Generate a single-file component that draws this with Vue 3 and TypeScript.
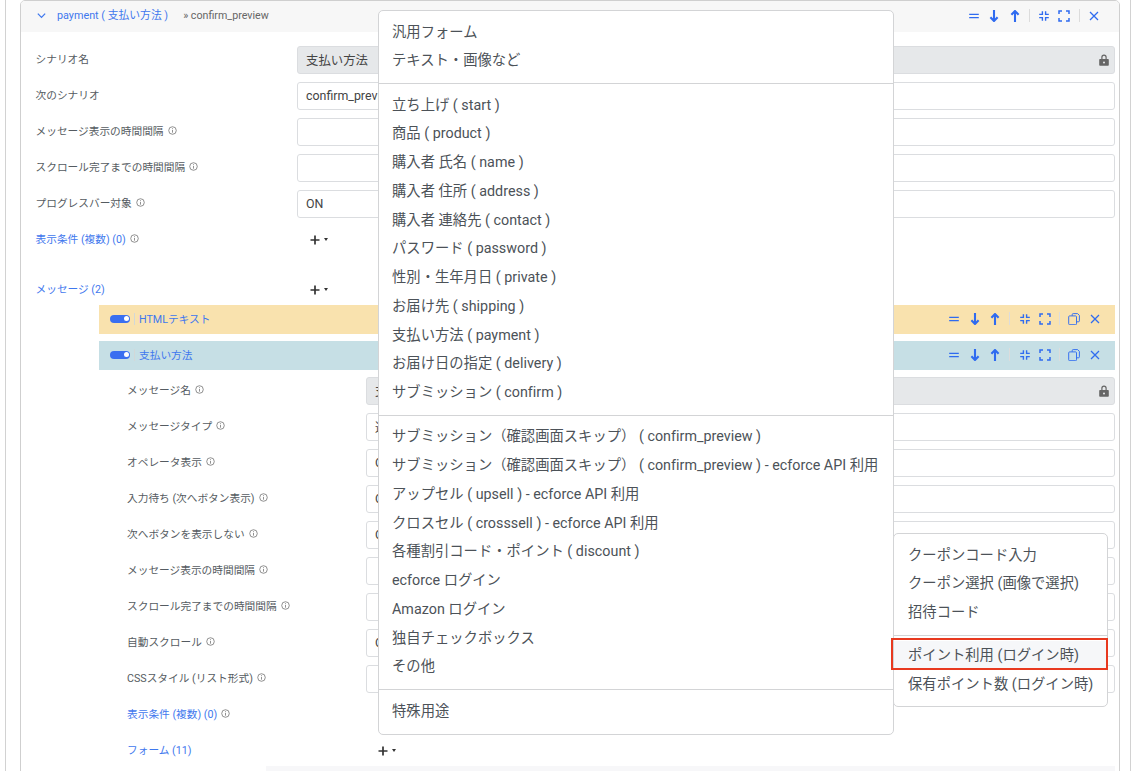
<script setup lang="ts">
type IconName = 'equal' | 'down' | 'up' | 'compress' | 'expand' | 'copy' | 'close'

const icons: Record<IconName, { d: string; w: number }> = {
  equal: { d: 'M1.2 4.4h9.6M1.2 7.6h9.6', w: 1.1 },
  down: { d: 'M6 0v10M2.4 7.2 6 11l3.6-3.8', w: 2.1 },
  up: { d: 'M6 12V2M2.4 4.8 6 1l3.6 3.8', w: 2.1 },
  compress: { d: 'M4.4 1.2v3.2H1.2M7.6 1.2v3.2h3.2M4.4 10.8V7.6H1.2M7.6 10.8V7.6h3.2', w: 1.4 },
  expand: { d: 'M1 4V1h3M8 1h3v3M1 8v3h3M11 8v3H8', w: 1.5 },
  copy: { d: 'M4.2 2.8V1.6q0-1 1-1h4.4l1.8 1.8v5.4q0 1-1 1H8.8M1.6 2.9h6q.9 0 .9.9v7q0 .9-.9.9h-6q-.9 0-.9-.9v-7q0-.9.9-.9z', w: 0.95 },
  close: { d: 'M2 2l8 8M10 2l-8 8', w: 1.25 }
}

const headActions: (IconName | 'sep')[] = ['equal', 'down', 'up', 'sep', 'compress', 'expand', 'sep', 'close']
const barActions: (IconName | 'sep')[] = ['equal', 'down', 'up', 'sep', 'compress', 'expand', 'sep', 'copy', 'close']

interface Field {
  label: string
  value: string
  info?: boolean
  locked?: boolean
}

const scenarioFields: Field[] = [
  { label: 'シナリオ名', value: '支払い方法', locked: true },
  { label: '次のシナリオ', value: 'confirm_preview' },
  { label: 'メッセージ表示の時間間隔', value: '', info: true },
  { label: 'スクロール完了までの時間間隔', value: '', info: true },
  { label: 'プログレスバー対象', value: 'ON', info: true }
]

const messageFields: Field[] = [
  { label: 'メッセージ名', value: '支払い方法', info: true, locked: true },
  { label: 'メッセージタイプ', value: '選択', info: true },
  { label: 'オペレータ表示', value: 'ON', info: true },
  { label: '入力待ち (次へボタン表示)', value: 'ON', info: true },
  { label: '次へボタンを表示しない', value: 'ON', info: true },
  { label: 'メッセージ表示の時間間隔', value: '', info: true },
  { label: 'スクロール完了までの時間間隔', value: '', info: true },
  { label: '自動スクロール', value: 'ON', info: true },
  { label: 'CSSスタイル (リスト形式)', value: '', info: true }
]

const bars = [
  { title: 'HTMLテキスト', tone: 'amber' },
  { title: '支払い方法', tone: 'teal' }
]

const menuGroups: string[][] = [
  ['汎用フォーム', 'テキスト・画像など'],
  [
    '立ち上げ ( start )',
    '商品 ( product )',
    '購入者 氏名 ( name )',
    '購入者 住所 ( address )',
    '購入者 連絡先 ( contact )',
    'パスワード ( password )',
    '性別・生年月日 ( private )',
    'お届け先 ( shipping )',
    '支払い方法 ( payment )',
    'お届け日の指定 ( delivery )',
    'サブミッション ( confirm )'
  ],
  [
    'サブミッション（確認画面スキップ） ( confirm_preview )',
    'サブミッション（確認画面スキップ） ( confirm_preview ) - ecforce API 利用',
    'アップセル ( upsell ) - ecforce API 利用',
    'クロスセル ( crosssell ) - ecforce API 利用',
    '各種割引コード・ポイント ( discount )',
    'ecforce ログイン',
    'Amazon ログイン',
    '独自チェックボックス',
    'その他'
  ],
  ['特殊用途']
]

const subGroups: string[][] = [
  ['クーポンコード入力', 'クーポン選択 (画像で選択)', '招待コード'],
  ['ポイント利用 (ログイン時)', '保有ポイント数 (ログイン時)']
]
</script>

<template>
  <div class="page">
    <div class="frame">
      <section class="panel">
        <header class="panel-head">
          <svg class="chevron" viewBox="0 0 12 12"><path d="M2 4l4 4 4-4" /></svg>
          <span class="scenario-title">payment ( 支払い方法 )</span>
          <span class="scenario-next">» confirm_preview</span>
          <div class="actions">
            <template v-for="(a, i) in headActions" :key="i">
              <span v-if="a === 'sep'" class="sep"></span>
              <span v-else class="action">
                <svg viewBox="0 0 12 12"><path :d="icons[a].d" :stroke-width="icons[a].w" /></svg>
              </span>
            </template>
          </div>
        </header>

        <div class="panel-body">
          <div v-for="f in scenarioFields" :key="f.label" class="row">
            <label class="label">
              {{ f.label }}
              <svg v-if="f.info" class="info" viewBox="0 0 10 10"><circle cx="5" cy="5" r="4.2" /><path d="M5 4.4v3M5 2.5v1" /></svg>
            </label>
            <div class="input" :class="{ locked: f.locked }">
              <span>{{ f.value }}</span>
              <svg v-if="f.locked" class="lock" viewBox="0 0 10 12"><path fill-rule="evenodd" d="M1 5h8a.8.8 0 0 1 .8.8v5.2a.8.8 0 0 1-.8.8H1a.8.8 0 0 1-.8-.8V5.800A.8.8 0 0 1 1 5zm1.300 0V3.200a2.700 2.700 0 0 1 5.400 0V5H6.500V3.200a1.500 1.500 0 0 0-3 0V5zM5 7.400a1 1 0 1 0 0 2 1 1 0 0 0 0-2z" /></svg>
            </div>
          </div>

          <div class="row">
            <label class="label link">
              表示条件 (複数) (0)
              <svg class="info" viewBox="0 0 10 10"><circle cx="5" cy="5" r="4.2" /><path d="M5 4.4v3M5 2.5v1" /></svg>
            </label>
            <button class="add">
              <svg class="plus" viewBox="0 0 10 10"><path d="M5 .5v9M.5 5h9" /></svg>
              <span class="caret"></span>
            </button>
          </div>

          <div class="row messages-row">
            <label class="label link">メッセージ (2)</label>
            <button class="add">
              <svg class="plus" viewBox="0 0 10 10"><path d="M5 .5v9M.5 5h9" /></svg>
              <span class="caret"></span>
            </button>
          </div>

          <div class="bars">
            <div v-for="b in bars" :key="b.title" class="bar" :class="b.tone">
              <span class="toggle"><span class="knob"></span></span>
              <span class="bar-divider"></span>
              <span class="bar-title">{{ b.title }}</span>
              <div class="actions">
                <template v-for="(a, i) in barActions" :key="i">
                  <span v-if="a === 'sep'" class="sep"></span>
                  <span v-else class="action">
                    <svg viewBox="0 0 12 12"><path :d="icons[a].d" :stroke-width="icons[a].w" /></svg>
                  </span>
                </template>
              </div>
            </div>
          </div>

          <div class="message-fields">
            <div v-for="f in messageFields" :key="f.label" class="row">
              <label class="label">
                {{ f.label }}
                <svg class="info" viewBox="0 0 10 10"><circle cx="5" cy="5" r="4.2" /><path d="M5 4.4v3M5 2.5v1" /></svg>
              </label>
              <div class="input" :class="{ locked: f.locked }">
                <span>{{ f.value }}</span>
                <svg v-if="f.locked" class="lock" viewBox="0 0 10 12"><path fill-rule="evenodd" d="M1 5h8a.8.8 0 0 1 .8.8v5.2a.8.8 0 0 1-.8.8H1a.8.8 0 0 1-.8-.8V5.800A.8.8 0 0 1 1 5zm1.300 0V3.200a2.700 2.700 0 0 1 5.400 0V5H6.500V3.200a1.500 1.500 0 0 0-3 0V5zM5 7.400a1 1 0 1 0 0 2 1 1 0 0 0 0-2z" /></svg>
              </div>
            </div>
            <div class="row">
              <label class="label link">
                表示条件 (複数) (0)
                <svg class="info" viewBox="0 0 10 10"><circle cx="5" cy="5" r="4.2" /><path d="M5 4.4v3M5 2.5v1" /></svg>
              </label>
            </div>
            <div class="row">
              <label class="label link">フォーム (11)</label>
              <button class="add">
                <svg class="plus" viewBox="0 0 10 10"><path d="M5 .5v9M.5 5h9" /></svg>
                <span class="caret"></span>
              </button>
            </div>
          </div>

          <div class="form-block"></div>
        </div>
      </section>
    </div>

    <nav class="menu main-menu">
      <div v-for="(g, i) in menuGroups" :key="i" class="menu-group">
        <div v-for="item in g" :key="item" class="menu-item">{{ item }}</div>
      </div>
    </nav>

    <nav class="menu sub-menu">
      <div v-for="(g, i) in subGroups" :key="i" class="menu-group">
        <div
          v-for="item in g"
          :key="item"
          class="menu-item"
          :class="{ marked: item === 'ポイント利用 (ログイン時)' }"
        >{{ item }}</div>
      </div>
    </nav>
  </div>
</template>

<style scoped>
.page {
  position: relative;
  width: 1139px;
  height: 771px;
  overflow: hidden;
  background: #fff;
  font-family: Roboto, "Noto Sans CJK JP", sans-serif;
  color: #555b61;
}
.frame {
  box-sizing: border-box;
  width: 1126px;
  height: 771px;
  margin-left: 5px;
  padding: 0 10px 0 14px;
  border-left: 1px solid #d2d2d2;
  border-right: 1px solid #d2d2d2;
}
.panel {
  box-sizing: border-box;
  height: 800px;
  border: 1px solid #cfcfcf;
  border-radius: 5px 5px 0 0;
  overflow: hidden;
}
.panel-head {
  box-sizing: border-box;
  display: flex;
  align-items: center;
  height: 31px;
  padding: 0 15px 2px 15px;
  background: #f7f7f7;
}
.chevron {
  width: 11px;
  height: 11px;
  margin-right: 10px;
  fill: none;
  stroke: #3f78ee;
  stroke-width: 1.4;
}
.scenario-title {
  padding-bottom: 3px;
  font-size: 10.8px;
  color: #3f78ee;
}
.scenario-next {
  margin-left: 15px;
  font-size: 10.7px;
  color: #666;
}
.actions {
  display: flex;
  align-items: center;
  margin-left: auto;
}
.action {
  display: flex;
  justify-content: center;
  width: 20.4px;
}
.action svg {
  width: 12px;
  height: 12px;
  fill: none;
  stroke: #2f6bf0;
}
.sep {
  width: 1px;
  height: 13px;
  margin: 0 4px;
  background: #dcdcdc;
}
.panel-body {
  padding: 14px 4px 0 14.5px;
}
.row {
  display: grid;
  grid-template-columns: 261.5px 1fr;
  align-items: center;
  min-height: 28px;
  margin-bottom: 8px;
}
.label {
  display: flex;
  align-items: center;
  gap: 4px;
  padding-bottom: 3px;
  font-size: 10.7px;
  color: #555b61;
}
.link {
  color: #3f78ee;
}
.info {
  flex: none;
  width: 9px;
  height: 9px;
  fill: none;
  stroke: #666;
  stroke-width: 0.8;
}
.input {
  box-sizing: border-box;
  display: flex;
  align-items: center;
  justify-content: space-between;
  height: 28px;
  padding: 0 5px 1px 8px;
  border: 1px solid #dbdde0;
  border-radius: 3px;
  font-size: 12.4px;
  color: #444;
  background: #fff;
}
.input.locked {
  background: #e6e8ea;
}
.lock {
  width: 10px;
  height: 12px;
  fill: #666;
}
.add {
  display: flex;
  align-items: center;
  width: max-content;
  padding: 0 0 1px 13px;
  border: 0;
  background: none;
}
.message-fields .add {
  padding-left: 12px;
}
.plus {
  width: 10px;
  height: 10px;
  fill: none;
  stroke: #333;
  stroke-width: 1.7;
}
.caret {
  margin-left: 4px;
  border-top: 3px solid #333;
  border-left: 2.8px solid transparent;
  border-right: 2.8px solid transparent;
}
.messages-row {
  margin-top: 22px;
  margin-bottom: 1px;
}
.bars {
  display: flex;
  flex-direction: column;
  gap: 7px;
  margin-left: 63.5px;
}
.bar {
  box-sizing: border-box;
  display: flex;
  align-items: center;
  height: 29px;
  padding: 0 10px 2px 11px;
  font-size: 10.7px;
}
.amber {
  background: #f9e2ae;
}
.teal {
  background: #c6dfe5;
}
.toggle {
  position: relative;
  width: 20px;
  height: 8px;
  border-radius: 4px;
  background: #3a6ff0;
}
.knob {
  position: absolute;
  top: 1.5px;
  right: 1.5px;
  width: 5px;
  height: 5px;
  border-radius: 50%;
  background: #fff;
}
.bar-divider {
  width: 1px;
  height: 12px;
  margin: 0 4px;
  background: #d2d8d8;
}
.bar-title {
  color: #3f78ee;
}
.message-fields {
  margin-top: 7px;
  margin-left: 91.5px;
}
.message-fields .row {
  grid-template-columns: 239px 1fr;
}
.form-block {
  height: 40px;
  margin-top: -7px;
  margin-left: 230.5px;
  background: #f7f7f9;
}
.menu {
  position: absolute;
  box-sizing: border-box;
  border: 1px solid #d3d4d6;
  border-radius: 5px;
  background: #fff;
  font-size: 14.3px;
  letter-spacing: 0.02px;
  color: #4c5258;
}
.main-menu {
  left: 378px;
  top: 10px;
  width: 516px;
}
.sub-menu {
  left: 893px;
  top: 533px;
  width: 215px;
}
.menu-group {
  padding: 6.5px 0 8.1px;
  border-bottom: 1px solid #d3d4d6;
}
.menu-group:last-child {
  border-bottom: 0;
}
.sub-menu .menu-group:last-child {
  padding-top: 5px;
}
.menu-item {
  box-sizing: border-box;
  height: 28.75px;
  padding: 0 13px;
  line-height: 28.75px;
  white-space: nowrap;
}
.sub-menu .menu-item {
  padding: 0 14px;
}
.marked {
  position: relative;
  background: #f6f7f9;
}
.marked::after {
  content: "";
  position: absolute;
  inset: -3px -1px 0 -3px;
  border: 2px solid #e8391f;
}
</style>

<style>
html,
body {
  margin: 0;
  overflow: hidden;
}
</style>
